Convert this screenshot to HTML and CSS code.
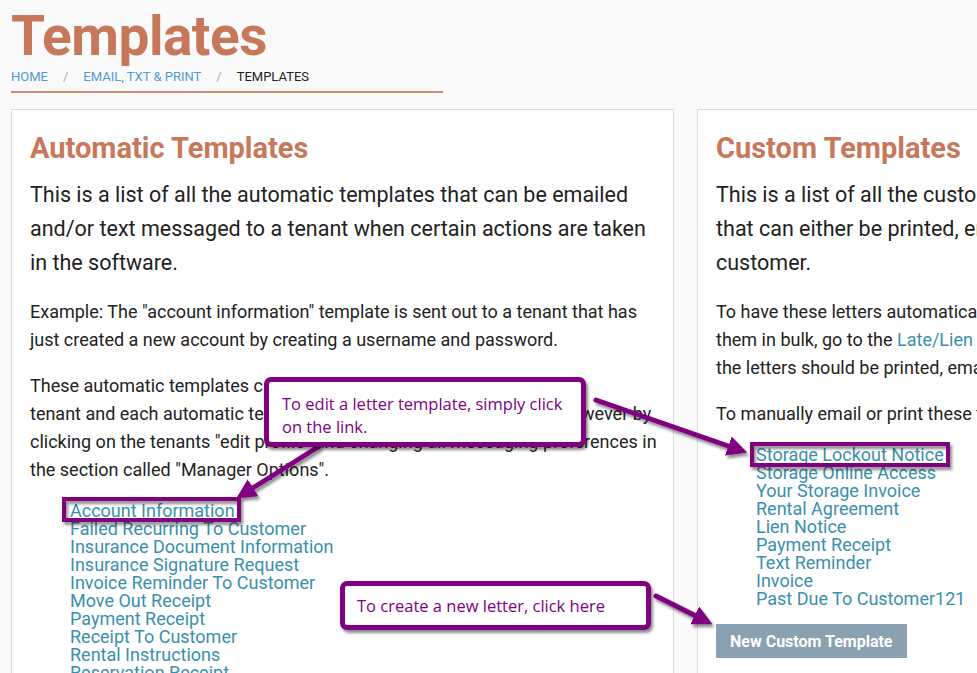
FILE: index.html
```html
<!DOCTYPE html>
<html lang="en">
<head>
    <meta charset="UTF-8">
    <title>Templates</title>
    <link rel="stylesheet" href="styles.css">
</head>
<body>
    <div class="page">
        <h1 class="title">Templates</h1>
        <div class="crumbs">
            <a href="#">Home</a><span class="sep">/</span><a href="#">Email, Txt &amp; Print</a><span class="sep">/</span><span class="here">Templates</span>
        </div>

        <div class="cards">
            <div class="card">
                <h2>Automatic Templates</h2>
                <p class="lead">This is a list of all the automatic templates that can be emailed and/or text messaged to a tenant when certain actions are taken in the software.</p>
                <p>Example: The "account information" template is sent out to a tenant that has just created a new account by creating a username and password.</p>
                <p class="fixed">These automatic templates can be turned on or off individually for the<br>
                tenant and each automatic template can be set up for each tenant however by<br>
                clicking on the tenants "edit profile" and changing all messaging preferences in<br>
                the section called "Manager Options".</p>
                <ul class="links">
                    <li><a href="#">Account Information</a></li>
                    <li><a href="#">Failed Recurring To Customer</a></li>
                    <li><a href="#">Insurance Document Information</a></li>
                    <li><a href="#">Insurance Signature Request</a></li>
                    <li><a href="#">Invoice Reminder To Customer</a></li>
                    <li><a href="#">Move Out Receipt</a></li>
                    <li><a href="#">Payment Receipt</a></li>
                    <li><a href="#">Receipt To Customer</a></li>
                    <li><a href="#">Rental Instructions</a></li>
                    <li><a href="#">Reservation Receipt</a></li>
                </ul>
            </div>
            <div class="card">
                <h2>Custom Templates</h2>
                <p class="lead fixed">This is a list of all the custom templates you have created<br>
                that can either be printed, emailed or text messaged to a<br>
                customer.</p>
                <p class="fixed">To have these letters automatically sent out on a schedule, or to print<br>
                them in bulk, go to the <a href="#">Late/Lien Rules</a> page where you can choose how<br>
                the letters should be printed, emailed or texted.</p>
                <p>To manually email or print these templates, go to the tenant's page.</p>
                <ul class="links">
                    <li><a href="#">Storage Lockout Notice</a></li>
                    <li><a href="#">Storage Online Access</a></li>
                    <li><a href="#">Your Storage Invoice</a></li>
                    <li><a href="#">Rental Agreement</a></li>
                    <li><a href="#">Lien Notice</a></li>
                    <li><a href="#">Payment Receipt</a></li>
                    <li><a href="#">Text Reminder</a></li>
                    <li><a href="#">Invoice</a></li>
                    <li><a href="#">Past Due To Customer121</a></li>
                </ul>
                <button class="btn" type="button">New Custom Template</button>
            </div>
        </div>
    </div>

    <!-- annotations drawn over the page -->
    <svg class="marks" width="977" height="673" viewBox="0 0 977 673">
        <defs>
            <filter id="shade" x="-20%" y="-20%" width="140%" height="160%">
                <feDropShadow dx="2" dy="3" stdDeviation="1.5" flood-color="#000" flood-opacity="0.45"/>
            </filter>
            <marker id="head" markerWidth="4" markerHeight="4" refX="1.2" refY="2" orient="auto" markerUnits="strokeWidth">
                <path d="M0,0 L4,2 L0,4 z" fill="#800080"/>
            </marker>
        </defs>
        <g filter="url(#shade)" stroke="#800080" fill="none">
            <rect x="64" y="499" width="175" height="21" stroke-width="4"/>
            <rect x="752" y="444" width="196" height="21" stroke-width="4"/>
            <line x1="318" y1="447" x2="248" y2="491" stroke-width="5" stroke-linecap="round" marker-end="url(#head)"/>
            <line x1="596" y1="400" x2="734" y2="448" stroke-width="5" stroke-linecap="round" marker-end="url(#head)"/>
            <line x1="656" y1="596" x2="700" y2="618" stroke-width="5" stroke-linecap="round" marker-end="url(#head)"/>
        </g>
    </svg>
    <div class="callout callout-edit">To edit a letter template, simply click on the link.</div>
    <div class="callout callout-new">To create a new letter, click here</div>
</body>
</html>
```

FILE: styles.css
```css
body { margin: 0; background: #fafafa; color: #222; font-family: Roboto, "Liberation Sans", sans-serif; overflow: hidden; position: relative; height: 673px; }
a { color: #3a8fad; text-decoration: none; }

.page { padding-left: 11px; }
.title { margin: 6px 0 0; font-size: 55px; letter-spacing: -0.5px; line-height: 60px; font-weight: 700; color: #c8785a; }
.crumbs { margin-top: 2px; width: 432px; height: 18px; padding-bottom: 5px; border-bottom: 2px solid #d38c6f; font-size: 13px; line-height: 18px; text-transform: uppercase; }
.crumbs a { color: #4f9bd6; }
.crumbs .sep { color: #aaa; padding: 0 15px; }
.crumbs .here { color: #222; }

.cards { display: flex; gap: 23px; margin-top: 16px; }
.card { flex: none; width: 631px; padding: 21px 12px 40px 18px; background: #fff; border: 1px solid #dcdcdc; }
.card h2 { margin: 0 0 13px; font-size: 29px; line-height: 34px; font-weight: 700; color: #c8785a; }
.card p { margin: 0 0 18px; font-size: 18px; line-height: 28px; }
.card p.lead { font-size: 21.5px; line-height: 34px; }
.card p.fixed { white-space: nowrap; }

.links { list-style: none; margin: 0 0 16px; padding-left: 40px; font-size: 18px; line-height: 18px; }

.btn { background: #8aa1b2; color: #fff; border: none; font-family: Roboto, sans-serif; font-weight: 700; font-size: 16px; height: 34px; padding: 0 14px; }

.marks { position: absolute; left: 0; top: 0; pointer-events: none; }
.callout { position: absolute; box-sizing: border-box; background: #fff; border: 5px solid #800080; border-radius: 7px; box-shadow: 2px 3px 3px rgba(0,0,0,0.45); color: #800080; font-family: "Open Sans", "Noto Sans", sans-serif; font-size: 16.5px; line-height: 23px; }
.callout-edit { left: 264px; top: 377px; width: 322px; height: 70px; padding: 10px 6px 10px 13px; }
.callout-new { left: 340px; top: 581px; width: 311px; height: 49px; padding: 8px 12px; }
```
